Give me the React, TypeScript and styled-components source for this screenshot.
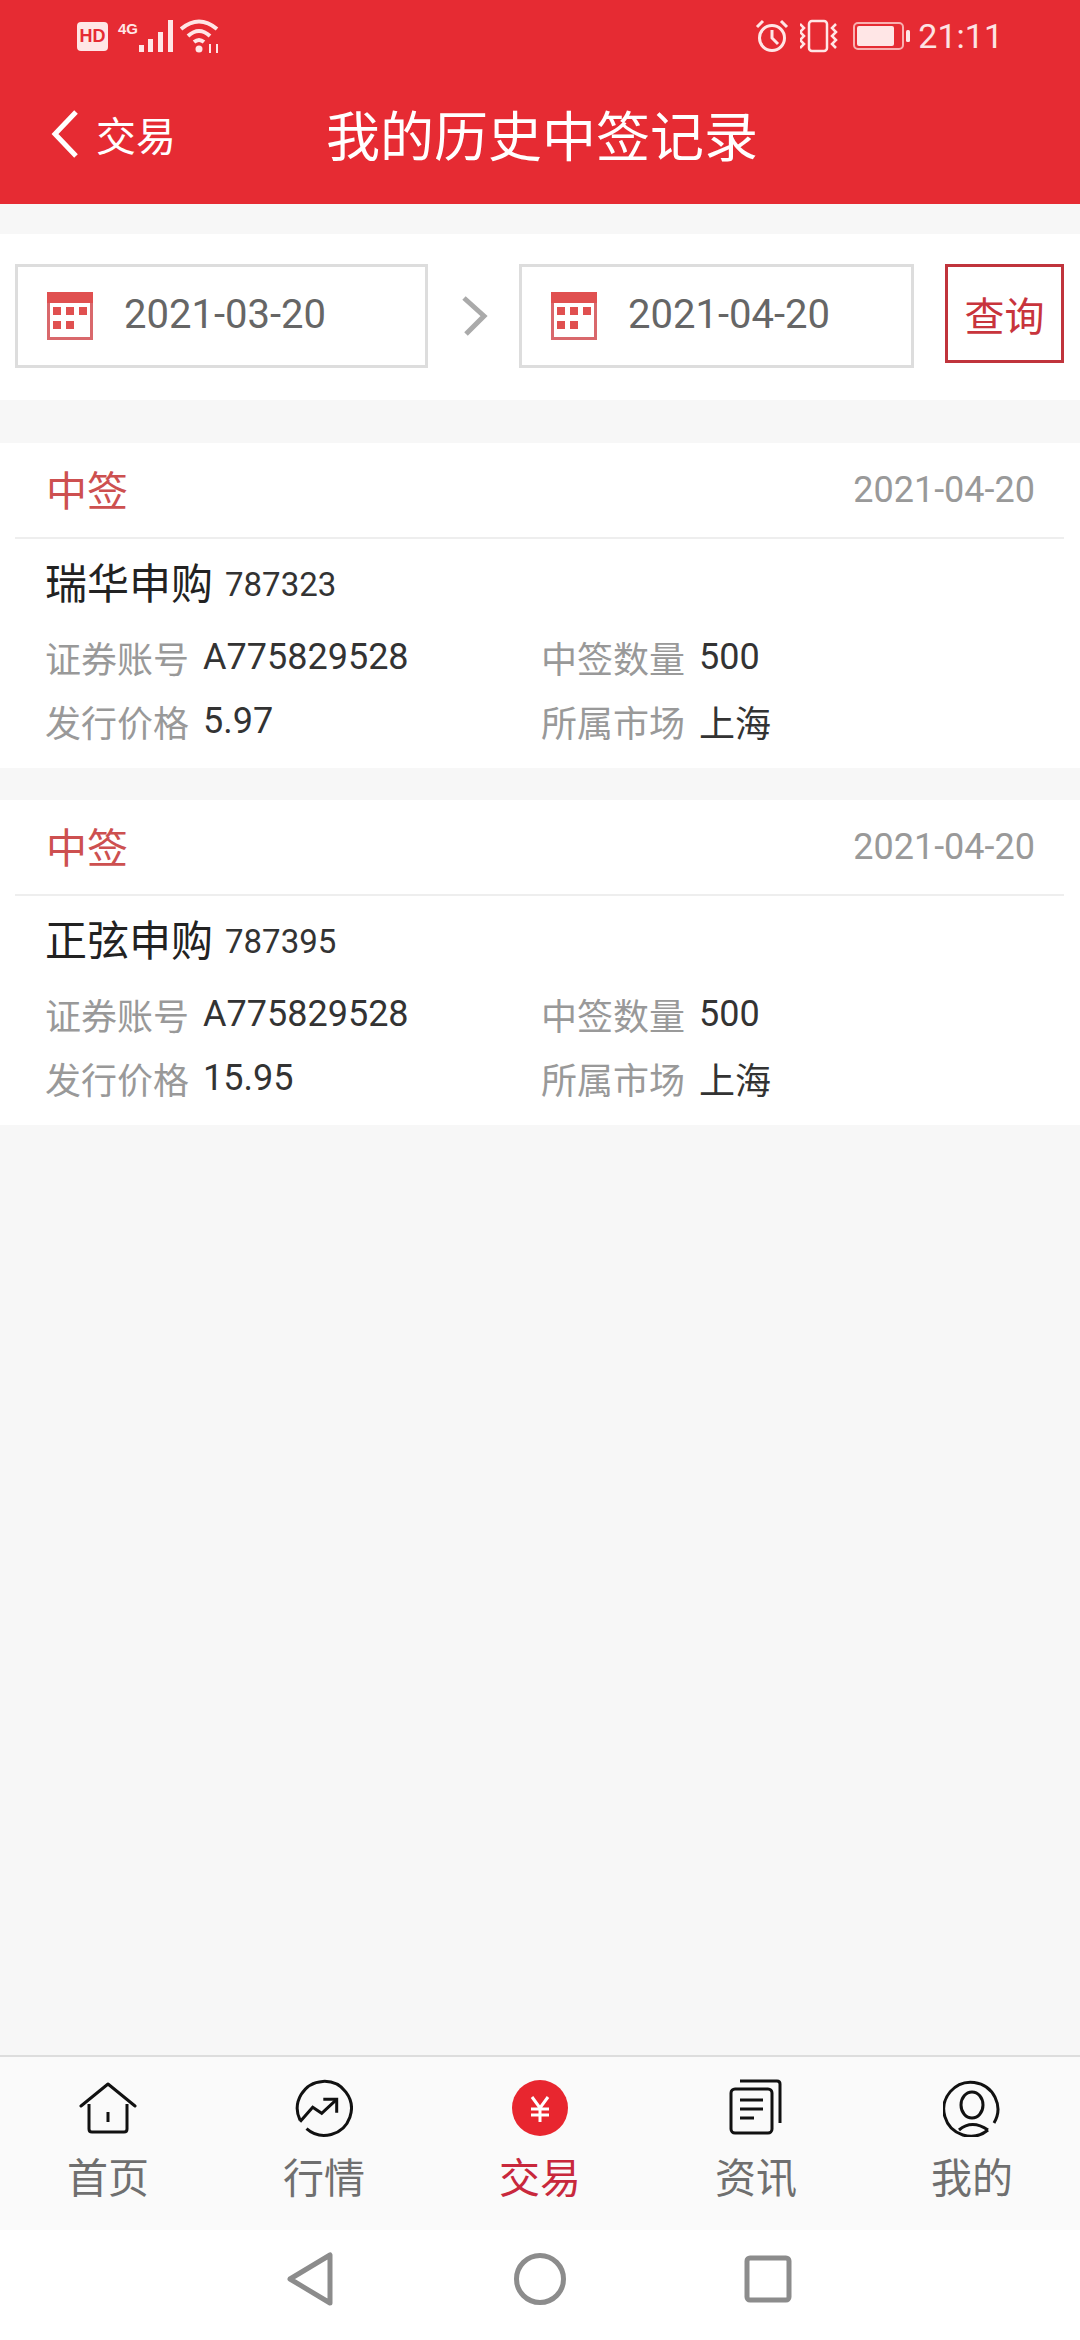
import styled, { createGlobalStyle } from "styled-components";

const records = [
  { name: "瑞华申购", code: "787323", price: "5.97" },
  { name: "正弦申购", code: "787395", price: "15.95" },
];

const App = () => {
  return (
    <Page>
      <GlobalStyle />
      <Header>
        <StatusBar>
          <StatusGroup $gap={6}>
            <HdBadge>HD</HdBadge>
            <NetworkLabel>4G</NetworkLabel>
            <SignalIcon />
            <WifiIcon />
          </StatusGroup>
          <StatusGroup $gap={11}>
            <AlarmIcon />
            <VibrateIcon />
            <BatteryIcon />
            <Clock>21:11</Clock>
          </StatusGroup>
        </StatusBar>
        <TitleBar>
          <BackLink>
            <svg width="30" height="50" viewBox="0 0 30 50" fill="none">
              <path d="M26 3 L5 25 L26 47" stroke="#fff" strokeWidth="5" />
            </svg>
            <span>交易</span>
          </BackLink>
          <Title>我的历史中签记录</Title>
        </TitleBar>
      </Header>

      <Main>
        <Filter>
          <DateBox $width={413}>
            <CalendarIcon />
            <DateText>2021-03-20</DateText>
          </DateBox>
          <ArrowSlot>
            <svg width="28" height="40" viewBox="0 0 28 40" fill="none">
              <path d="M4 2 L24 20 L6 38" stroke="#aaa" strokeWidth="5" />
            </svg>
          </ArrowSlot>
          <DateBox $width={395}>
            <CalendarIcon />
            <DateText>2021-04-20</DateText>
          </DateBox>
          <QueryButton>查询</QueryButton>
        </Filter>

        {records.map((r) => (
          <Card key={r.code}>
            <CardHead>
              <Status>中签</Status>
              <CardDate>2021-04-20</CardDate>
            </CardHead>
            <NameRow>
              <Name>{r.name}</Name>
              <Code>{r.code}</Code>
            </NameRow>
            <Details>
              <Field>
                <Label>证券账号</Label>
                <Value>A775829528</Value>
              </Field>
              <Field>
                <Label>中签数量</Label>
                <Value>500</Value>
              </Field>
              <Field>
                <Label>发行价格</Label>
                <Value>{r.price}</Value>
              </Field>
              <Field>
                <Label>所属市场</Label>
                <Value>上海</Value>
              </Field>
            </Details>
          </Card>
        ))}
      </Main>

      <TabBar>
        <Tab>
          <TabIcon>
            <path d="M2 27 L29 5 L56 27" strokeLinecap="round" strokeLinejoin="round" />
            <path d="M10 25 V50 Q10 53 13 53 H45 Q48 53 48 50 V25" />
            <path d="M29 33 V43" />
          </TabIcon>
          <TabLabel>首页</TabLabel>
        </Tab>
        <Tab>
          <TabIcon>
            <path d="M11.5 49.6 A27 27 0 1 0 5 41" />
            <path d="M5 42.7 L17.7 28.3 L26.7 34.3 L41.7 20.3" />
            <path d="M28.3 20.3 H41.7 V33.7" />
          </TabIcon>
          <TabLabel>行情</TabLabel>
        </Tab>
        <Tab>
          <TabIcon>
            <circle cx="29" cy="29" r="28" fill="#e8262f" stroke="none" />
            <path d="M21 18 L29 29 L37 18 M29 29 V43 M20 30 H38 M20 36 H38" stroke="#fff" />
          </TabIcon>
          <TabLabel $active>交易</TabLabel>
        </Tab>
        <Tab>
          <TabIcon>
            <rect x="4" y="10" width="41" height="44" rx="4" />
            <path d="M13 2 H50 Q53 2 53 5 V44" />
            <path d="M13 21 H36 M13 30 H36 M13 39 H27" />
          </TabIcon>
          <TabLabel>资讯</TabLabel>
        </Tab>
        <Tab>
          <TabIcon>
            <path d="M51 44 A27 27 0 1 0 45 51" />
            <ellipse cx="29" cy="26" rx="11" ry="13" />
            <path d="M16 51 Q29 40 45 51" />
          </TabIcon>
          <TabLabel>我的</TabLabel>
        </Tab>
      </TabBar>

      <NavBar>
        <svg width="50" height="54" viewBox="0 0 50 54" fill="none">
          <path d="M3 27 L43 3 V51 Z" stroke="#8c8c8c" strokeWidth="5" strokeLinejoin="round" />
        </svg>
        <svg width="54" height="54" viewBox="0 0 54 54" fill="none">
          <circle cx="27" cy="27" r="23.5" stroke="#8c8c8c" strokeWidth="5" />
        </svg>
        <svg width="50" height="54" viewBox="0 0 50 54" fill="none">
          <rect x="4" y="6" width="42" height="42" rx="3" stroke="#8c8c8c" strokeWidth="5" />
        </svg>
      </NavBar>
    </Page>
  );
};

export default App;

const SignalIcon = () => (
  <svg width="36" height="34" viewBox="0 0 36 34" fill="#ffe6e6">
    <rect x="1" y="26" width="5" height="7" />
    <rect x="10" y="20" width="5" height="13" />
    <rect x="20" y="13" width="5" height="20" />
    <rect x="30" y="1" width="5" height="32" />
  </svg>
);

const WifiIcon = () => (
  <svg width="42" height="36" viewBox="0 0 42 36" fill="none">
    <g stroke="#ffe6e6" strokeWidth="4">
      <path d="M1 11 Q19 -4 37 11" />
      <path d="M8 18 Q19 8 30 18" />
      <path d="M14 24 Q19 20 24 24" />
    </g>
    <circle cx="19" cy="31" r="3.5" fill="#ffe6e6" />
    <path d="M30 26 V35 M37 26 V35" stroke="#ffe6e6" strokeWidth="2" />
  </svg>
);

const AlarmIcon = () => (
  <svg width="34" height="34" viewBox="0 0 34 34" fill="none">
    <g stroke="#ffe6e6" strokeWidth="3">
      <circle cx="17" cy="19" r="12.5" />
      <path d="M17 11 V19 L23 25" />
      <path d="M2 8 L8 2 M32 8 L26 2" />
    </g>
  </svg>
);

const VibrateIcon = () => (
  <svg width="42" height="34" viewBox="0 0 42 34" fill="none">
    <g stroke="#ffe6e6" strokeWidth="2.5" transform="translate(-3 0)">
      <rect x="12" y="2" width="18" height="30" rx="3" />
      <path d="M3 5 L7 9 L3 13 L7 17 L3 21 L7 25 L3 29" />
      <path d="M39 5 L35 9 L39 13 L35 17 L39 21 L35 25 L39 29" />
    </g>
  </svg>
);

const BatteryIcon = () => (
  <svg width="58" height="30" viewBox="0 0 58 30" fill="none">
    <rect x="1" y="2" width="49" height="26" rx="4" stroke="#f9b0b0" strokeWidth="2" />
    <rect x="4" y="5" width="37" height="20" rx="2" fill="#ffe6e6" />
    <rect x="53" y="9" width="4" height="12" rx="1.5" fill="#ffe6e6" />
  </svg>
);

const CalendarIcon = () => (
  <svg width="46" height="48" viewBox="0 0 46 48" fill="none">
    <rect x="1.5" y="1.5" width="43" height="45" stroke="#d9686c" strokeWidth="3" />
    <rect x="0" y="0" width="46" height="11" fill="#e05050" />
    <g fill="#e05050">
      <rect x="6" y="15" width="8" height="8" />
      <rect x="19" y="15" width="8" height="8" />
      <rect x="32" y="15" width="8" height="8" />
      <rect x="6" y="29" width="8" height="8" />
      <rect x="19" y="29" width="8" height="8" />
    </g>
  </svg>
);

const GlobalStyle = createGlobalStyle`
  html, body {
    margin: 0;
    padding: 0;
    background: #f7f7f7;
  }

  body {
    font-family: Roboto, "Noto Sans CJK SC", sans-serif;
  }

  * {
    box-sizing: border-box;
  }
`;

const Page = styled.div`
  width: 1080px;
  height: 2340px;
  display: flex;
  flex-direction: column;
  background-color: #f7f7f7;
  overflow: hidden;
`;

const Header = styled.header`
  height: 204px;
  background-color: #e62b33;
  color: #fff;
  flex-shrink: 0;
`;

const StatusBar = styled.div`
  height: 72px;
  padding: 0 77px 0 77px;
  display: flex;
  align-items: center;
  justify-content: space-between;
`;

const StatusGroup = styled.div<{ $gap: number }>`
  display: flex;
  align-items: center;
  gap: ${({ $gap }) => $gap}px;
`;

const HdBadge = styled.div`
  width: 31px;
  height: 29px;
  border-radius: 4px;
  background-color: #ffe6e6;
  color: #e62b33;
  font: 700 18px "Liberation Sans", sans-serif;
  line-height: 29px;
  text-align: center;
`;

const NetworkLabel = styled.span`
  font: 700 15px "Liberation Sans", sans-serif;
  color: #ffe6e6;
  margin: -16px -6px 0 4px;
`;

const Clock = styled.span`
  font-size: 34px;
  color: #fde3e3;
  margin-left: -4px;
`;

const TitleBar = styled.div`
  height: 132px;
  padding: 0 0 9px 50px;
  display: flex;
  align-items: center;
`;

const BackLink = styled.div`
  width: 276px;
  display: flex;
  align-items: center;
  gap: 16px;
  font-size: 40px;
`;

const Title = styled.h1`
  margin: 0;
  font-size: 54px;
  font-weight: 400;
  white-space: nowrap;
`;

const Main = styled.main`
  flex: 1;
  padding-top: 30px;
`;

const Filter = styled.section`
  height: 166px;
  margin-bottom: 43px;
  padding: 30px 16px 0 15px;
  display: flex;
  align-items: flex-start;
  background-color: #fff;
`;

const DateBox = styled.div<{ $width: number }>`
  width: ${({ $width }) => $width}px;
  height: 104px;
  padding-left: 29px;
  display: flex;
  align-items: center;
  gap: 31px;
  border: 3px solid #ddd;
`;

const DateText = styled.span`
  font-size: 40px;
  color: #666;
  margin-bottom: 4px;
`;

const ArrowSlot = styled.div`
  width: 91px;
  height: 104px;
  display: flex;
  align-items: center;
  justify-content: center;
`;

const QueryButton = styled.button`
  width: 119px;
  height: 99px;
  margin-left: auto;
  padding: 0;
  font-family: inherit;
  font-size: 40px;
  color: #c8343c;
  background-color: transparent;
  border: 3px solid #c0343c;
`;

const Card = styled.article`
  height: 325px;
  margin-bottom: 32px;
  background-color: #fff;
`;

const CardHead = styled.div`
  height: 96px;
  margin: 0 16px 0 15px;
  padding: 0 29px 0 31px;
  display: flex;
  align-items: center;
  justify-content: space-between;
  border-bottom: 2px solid #eee;
`;

const Status = styled.span`
  font-size: 41px;
  color: #cd5050;
  margin-bottom: 4px;
`;

const CardDate = styled.span`
  font-size: 36px;
  color: #999;
`;

const NameRow = styled.div`
  height: 86px;
  padding-left: 45px;
  display: flex;
  align-items: center;
  gap: 12px;
`;

const Name = styled.span`
  font-size: 42px;
  color: #222;
  margin-bottom: 4px;
`;

const Code = styled.span`
  font-size: 33px;
  color: #333;
  margin-top: 4px;
`;

const Details = styled.div`
  padding-left: 45px;
  display: grid;
  grid-template-columns: 496px 1fr;
  grid-auto-rows: 64px;
`;

const Field = styled.div`
  display: flex;
  align-items: center;
  gap: 14px;
`;

const Label = styled.span`
  font-size: 36px;
  color: #999;
`;

const Value = styled.span`
  font-size: 36px;
  color: #333;
`;

const TabBar = styled.nav`
  height: 175px;
  flex-shrink: 0;
  display: grid;
  grid-template-columns: repeat(5, 1fr);
  background-color: #fafafa;
  border-top: 2px solid #ddd;
`;

const Tab = styled.div`
  padding-top: 22px;
  display: flex;
  flex-direction: column;
  align-items: center;
`;

const TabIcon = styled.svg.attrs({ viewBox: "0 0 58 58", width: 58, height: 58 })`
  fill: none;
  stroke: #111;
  stroke-width: 3;
`;

const TabLabel = styled.span<{ $active?: boolean }>`
  margin-top: 10px;
  font-size: 41px;
  line-height: 64px;
  color: ${({ $active }) => ($active ? "#c8283c" : "#6f6f6f")};
`;

const NavBar = styled.div`
  height: 110px;
  flex-shrink: 0;
  padding: 0 287px 12px;
  display: flex;
  align-items: center;
  justify-content: space-between;
  background-color: #fff;
`;
